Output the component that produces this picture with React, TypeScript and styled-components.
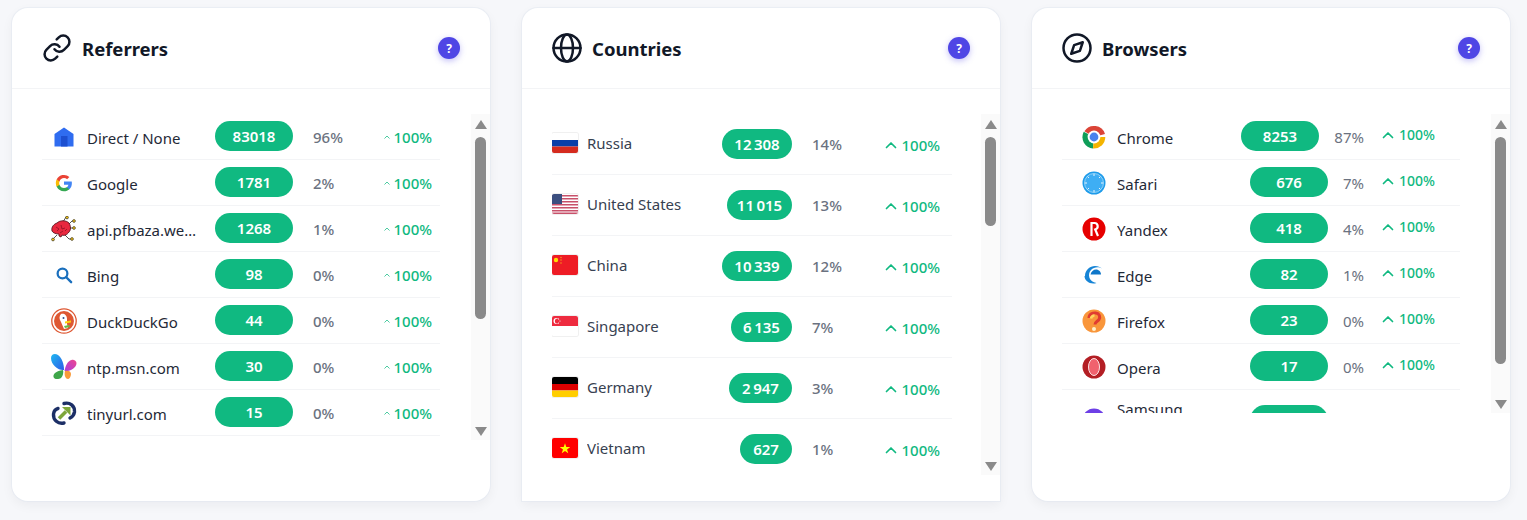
import React from "react";
import styled, { createGlobalStyle } from "styled-components";

const Global = createGlobalStyle`
  html, body { margin: 0; padding: 0; height: 520px; overflow: hidden; background: #f6f7fa; }
  * { box-sizing: border-box; }
`;

const Page = styled.div`
  display: flex;
  gap: 32px;
  padding: 8px 12px;
  font-family: "Noto Sans", "Open Sans", sans-serif;
  color: #1f2937;
`;

const Card = styled.section<{ $square?: boolean }>`
  width: 478px;
  height: 493px;
  background: #fff;
  border-radius: ${(p) => (p.$square ? "16px 16px 0 0" : "16px")};
  box-shadow: 0 0 0 1px rgba(226, 232, 240, 0.55), 0 4px 12px rgba(15, 23, 42, 0.05);
  display: flex;
  flex-direction: column;
  overflow: hidden;
`;

const Header = styled.header`
  height: 81px;
  flex: none;
  border-bottom: 1px solid #f3f4f6;
  display: flex;
  align-items: center;
  justify-content: space-between;
  padding: 0 30px;
`;

const Title = styled.h2`
  margin: 0;
  display: flex;
  align-items: center;
  gap: 10px;
  font-size: 18.5px;
  line-height: 24px;
  font-weight: 700;
  color: #111827;
`;

const TitleText = styled.span`
  padding-top: 1px;
`;

const Help = styled.span`
  width: 22px;
  height: 22px;
  border-radius: 50%;
  background: #4f46e5;
  color: #fff;
  font-size: 12px;
  font-weight: 700;
  display: flex;
  align-items: center;
  justify-content: center;
  box-shadow: 0 2px 6px rgba(79, 70, 229, 0.35);
`;

const Body = styled.div<{ $height: number }>`
  margin-top: 25px;
  height: ${(p) => p.$height}px;
  display: flex;
  justify-content: space-between;
`;

const List = styled.div<{ $left: number; $width: number }>`
  margin-left: ${(p) => p.$left}px;
  width: ${(p) => p.$width}px;
  overflow: hidden;
`;

const Row = styled.div<{ $height: number }>`
  height: ${(p) => p.$height}px;
  flex: none;
  border-bottom: 1px solid #f3f4f6;
  display: flex;
  align-items: center;
  font-size: 15px;
  overflow: hidden;
`;

const IconSlot = styled.span<{ $indent?: number }>`
  width: ${(p) => 45 + (p.$indent ?? 0)}px;
  flex: none;
  display: flex;
  align-items: center;
  justify-content: center;
  padding-left: ${(p) => p.$indent ?? 0}px;
  padding-right: 2px;
`;

const FlagSlot = styled.span`
  width: 35px;
  flex: none;
  display: flex;
  align-items: center;
  margin-top: -2px;
`;

const FlagBox = styled.span`
  display: block;
  width: 26px;
  height: 20px;
  border-radius: 2px;
  overflow: hidden;
  box-shadow: 0 0 0 1px #f0f0f0;
`;

const FlagArt = styled.svg`
  display: block;
`;

const Name = styled.span<{ $width: number; $shift?: number; $dim?: boolean; $wrap?: boolean }>`
  width: ${(p) => p.$width}px;
  flex: none;
  line-height: 20px;
  white-space: ${(p) => (p.$wrap ? "normal" : "nowrap")};
  overflow: hidden;
  text-overflow: ellipsis;
  color: ${(p) => (p.$dim ? "#374151" : "#1f2937")};
  transform: translateY(${(p) => p.$shift ?? 0}px);
`;

const PillCell = styled.span<{ $width: number; $shift?: number }>`
  width: ${(p) => p.$width}px;
  flex: none;
  display: flex;
  justify-content: flex-end;
  transform: translateX(${(p) => p.$shift ?? 0}px);
`;

const Pill = styled.span<{ $width: number; $rise?: number }>`
  width: ${(p) => p.$width}px;
  height: 30px;
  border-radius: 15px;
  background: #10b981;
  color: #fff;
  font-weight: 600;
  font-size: 15px;
  display: flex;
  align-items: center;
  justify-content: center;
  margin-top: ${(p) => p.$rise ?? -2}px;
`;

const Pct = styled.span<{ $width: number; $right?: boolean; $gap?: number }>`
  width: ${(p) => p.$width}px;
  margin-left: ${(p) => p.$gap ?? 0}px;
  flex: none;
  color: #6b7280;
  font-size: 15px;
  font-weight: ${(p) => (p.$right ? 400 : 500)};
  text-align: ${(p) => (p.$right ? "right" : "left")};
`;

const Trend = styled.span<{ $gap: number; $size: number; $weight: number; $rise?: number; $end: number }>`
  margin-left: auto;
  margin-right: ${(p) => p.$end}px;
  display: flex;
  align-items: center;
  gap: ${(p) => p.$gap}px;
  color: #10b981;
  font-size: ${(p) => p.$size}px;
  font-weight: ${(p) => p.$weight};
  transform: translateY(${(p) => p.$rise ?? 0}px);
`;

const Scrollbar = styled.div`
  width: 19px;
  flex: none;
  background: #fafafa;
  display: flex;
  flex-direction: column;
  align-items: center;
  padding: 6px 0 4px;
`;

const ArrowUp = styled.span`
  width: 0;
  height: 0;
  border-left: 6.5px solid transparent;
  border-right: 6.5px solid transparent;
  border-bottom: 9px solid #8a8a8a;
  flex: none;
`;

const ArrowDown = styled(ArrowUp)`
  border-bottom: 0;
  border-top: 9px solid #8a8a8a;
  margin-top: auto;
`;

const Thumb = styled.span<{ $height: number }>`
  width: 11px;
  height: ${(p) => p.$height}px;
  margin-top: 8px;
  border-radius: 6px;
  background: #8a8a8a;
  flex: none;
`;

const Icon = ({ children, size = 24 }: { children: React.ReactNode; size?: number }) => (
  <svg width={size} height={size} viewBox="0 0 24 24">{children}</svg>
);

const HeaderIcon = ({ children }: { children: React.ReactNode }) => (
  <svg width="30" height="30" viewBox="0 0 24 24" fill="none" stroke="#111827" strokeWidth="2" strokeLinecap="round" strokeLinejoin="round">{children}</svg>
);

const LinkIcon = () => (
  <HeaderIcon>
    <path d="M10 13a5 5 0 0 0 7.54.54l3-3a5 5 0 0 0-7.07-7.07l-1.72 1.71" />
    <path d="M14 11a5 5 0 0 0-7.54-.54l-3 3a5 5 0 0 0 7.07 7.07l1.71-1.71" />
  </HeaderIcon>
);
const GlobeIcon = () => (
  <HeaderIcon>
    <circle cx="12" cy="12" r="10.800" />
    <path d="M1.200 12h21.600" />
    <ellipse cx="12" cy="12" rx="4.800" ry="10.800" />
  </HeaderIcon>
);
const CompassIcon = () => (
  <HeaderIcon>
    <circle cx="12" cy="12" r="10.800" />
    <path d="M16.600 7.400l-2.300 6.900-6.900 2.300 2.300-6.900z" />
  </HeaderIcon>
);

const icons: Record<string, React.ReactNode> = {
  direct: (
    <Icon>
      <path d="M12 2.500 21.500 9v12.500h-19V9z" fill="#2f6cf0" />
      <rect x="9" y="11" width="6.500" height="10.500" fill="#1d4fd0" />
    </Icon>
  ),
  google: (
    <Icon size={18}>
      <path d="M22.500 12.200c0-.8-.1-1.500-.2-2.200H12v4.200h5.900a5 5 0 0 1-2.200 3.300v2.700h3.500c2.100-1.900 3.300-4.700 3.300-8z" fill="#4285f4" />
      <path d="M12 23c3 0 5.400-1 7.200-2.700l-3.500-2.700c-1 .7-2.200 1.100-3.700 1.100-2.800 0-5.200-1.900-6.100-4.500H2.300v2.800A11 11 0 0 0 12 23z" fill="#34a853" />
      <path d="M5.900 14.200a6.600 6.600 0 0 1 0-4.300V7.100H2.300a11 11 0 0 0 0 9.900z" fill="#fbbc05" />
      <path d="M12 5.400c1.600 0 3 .6 4.100 1.600l3.100-3.100A11 11 0 0 0 2.300 7.100l3.600 2.800C6.800 7.300 9.200 5.400 12 5.400z" fill="#ea4335" />
    </Icon>
  ),
  brain: (
    <svg width="26" height="26" viewBox="0 0 26 26">
      <g stroke="#555" strokeWidth="1" fill="none">
        <path d="M12 6 15 1h1M18 8l3-3h2M19 12h4M14 19l4 4h3M6 19l-4 4" />
      </g>
      <path d="M1 15c-1-4 2-7 5-8 3-3 9-3 12 0 2 3 2 7 0 9-2 3-5 4-7 3l-1 2-2-1v-2c-3 0-6-1-7-3z" fill="#e8283f" stroke="#4a0d16" strokeWidth=".8" />
      <path d="M5 11l3 2-2 2M10 9l1 4 3-1M9 17l3-2M14 15l2-2" stroke="#8e1325" strokeWidth=".8" fill="none" />
      <g fill="#f5c518" stroke="#222" strokeWidth=".6">
        <circle cx="16" cy="1.500" r="1.400" />
        <circle cx="23" cy="5" r="1.400" />
        <circle cx="23" cy="12" r="1.400" />
        <circle cx="21" cy="23" r="1.400" />
        <circle cx="2" cy="23.500" r="1.400" />
      </g>
    </svg>
  ),
  bing: (
    <Icon size={18}>
      <circle cx="10" cy="10" r="6.500" fill="none" stroke="#1a6fbd" strokeWidth="3" />
      <path d="M15 15l6.500 6.500" stroke="#1a6fbd" strokeWidth="3.200" strokeLinecap="round" />
    </Icon>
  ),
  duck: (
    <svg width="26" height="26" viewBox="0 0 26 26">
      <circle cx="13" cy="13" r="12.200" fill="#fff" stroke="#de5833" strokeWidth="1.300" />
      <circle cx="13" cy="13" r="10" fill="#de5833" />
      <path d="M10 6c3-1 6 1 6 5v5l1 4-4 1-3-7c-2-3-2-6 0-8z" fill="#fff" />
      <circle cx="12.500" cy="10" r="1" fill="#2d4f8e" />
      <path d="M14 13.500l6-1v2l-6 1z" fill="#fdd20a" />
      <path d="M13 18l5-1 1 2-5 1z" fill="#65bc46" />
    </svg>
  ),
  msn: (
    <svg width="26" height="26" viewBox="0 0 26 26">
      <defs>
        <linearGradient id="mL" x1="0" y1="0" x2="1" y2="1"><stop offset="0" stopColor="#1eb8f0" /><stop offset="1" stopColor="#2d5ce8" /></linearGradient>
        <linearGradient id="mR" x1="1" y1="0" x2="0" y2="1"><stop offset="0" stopColor="#f0468c" /><stop offset="1" stopColor="#a83ce0" /></linearGradient>
      </defs>
      <path d="M0 4C0 0 4-1 7 1c4 3 6 9 6 15-5 1-13-5-13-12z" fill="url(#mL)" />
      <path d="M25.500 9c0-2-3-4-5-3-4 1-6 6-7 11 5 1 12-3 12-8z" fill="url(#mR)" />
      <path d="M3 24c-2-3 1-7 9-8 1 4-1 9-5 9-2 0-3 0-4-1z" fill="#3fa64a" />
      <path d="M14 17c3-1 6 0 6 3s-2 5-3 5c-3 0-4-5-3-8z" fill="#f99a3a" />
    </svg>
  ),
  tiny: (
    <svg width="26" height="26" viewBox="0 0 26 26">
      <path d="M13 3.500C19 2 24 6 23.500 12c-.5 3-2.500 5-4.500 6M13 23c-6 1.500-11-3-10.500-9C3 11 5 9 7 8.500" fill="none" stroke="#1c2f66" strokeWidth="3.400" strokeLinecap="round" />
      <path d="M8 18.500 15 11.500" stroke="#7da63a" strokeWidth="3.600" />
      <path d="M11 7h8.500v8.500z" fill="#7da63a" />
    </svg>
  ),
  chrome: (
    <svg width="24" height="24" viewBox="0 0 24 24">
      <path d="M12 12 2.400 6.200A11.500 11.500 0 0 1 23 9z" fill="#db4437" />
      <path d="M12 12 1.700 6.800A11.500 11.500 0 0 0 11 23.500z" fill="#0f9d58" />
      <path d="M12 12h11.300A11.500 11.500 0 0 1 11 23.500z" fill="#f4b400" />
      <circle cx="12" cy="12" r="6.400" fill="#fff" />
      <circle cx="12" cy="12" r="4.400" fill="#4a82ed" />
    </svg>
  ),
  safari: (
    <svg width="24" height="24" viewBox="0 0 24 24">
      <circle cx="12" cy="12" r="11.500" fill="#1e9bea" />
      <circle cx="12" cy="12" r="9.500" fill="#3eaef4" stroke="#bfe6fb" strokeWidth=".7" />
      <path d="M12 3v2M12 19v2M3 12h2M19 12h2M5.600 5.600l1.300 1.300M17 17l1.300 1.300M5.600 18.400 7 17M17 7l1.300-1.300" stroke="#fff" strokeWidth=".9" />
    </svg>
  ),
  yandex: (
    <svg width="24" height="24" viewBox="0 0 24 24">
      <circle cx="12" cy="12" r="11.500" fill="#e60000" />
      <path d="M9.500 19V6h3a3.300 3.300 0 0 1 .7 6.500L16 19" fill="none" stroke="#fff" strokeWidth="2.200" />
    </svg>
  ),
  edge: (
    <svg width="24" height="24" viewBox="0 0 24 24">
      <path d="M3 13C3 7 8 3 13 3c3 0 5 1 7 2.500-3-2-8-2-11 1.500-2 2-2.500 5-1.500 8 1 2.500 3.500 4.500 7 5-6 2-12-2-12-7z" fill="#1684d6" />
      <path d="M8.500 11.500c.5-3 3-5 5.500-5 3 0 5 2.500 5 5z" fill="#0f77c9" />
    </svg>
  ),
  firefox: (
    <svg width="24" height="24" viewBox="0 0 24 24">
      <circle cx="12" cy="12" r="11.500" fill="#f9963b" />
      <path d="M7 9c0-4 4-5.500 7-5 3.500.5 4.500 4 3 6.500-1.500 2-4 2.500-4 5" fill="none" stroke="#e03c31" strokeWidth="3" />
      <path d="M9 9.500c.3-2 2-3 3.500-2.800" fill="none" stroke="#ffd75e" strokeWidth="2.600" />
      <circle cx="12" cy="20" r="2" fill="#fff1c9" />
    </svg>
  ),
  opera: (
    <svg width="24" height="24" viewBox="0 0 24 24">
      <circle cx="12" cy="12" r="11.500" fill="#b31e24" />
      <ellipse cx="12" cy="12" rx="5.500" ry="8.500" fill="#f0626e" stroke="#fde3e5" strokeWidth="1" />
    </svg>
  ),
  samsung: (
    <svg width="24" height="24" viewBox="0 0 24 24">
      <circle cx="12" cy="12" r="11.500" fill="#6d3fe6" />
    </svg>
  ),
};

const Flag = ({ children }: { children: React.ReactNode }) => (
  <FlagSlot>
    <FlagBox>
      <FlagArt width="26" height="20" viewBox="0 0 26 20">{children}</FlagArt>
    </FlagBox>
  </FlagSlot>
);

const flags: Record<string, React.ReactNode> = {
  ru: (
    <>
      <rect width="26" height="20" fill="#fff" />
      <rect y="7" width="26" height="6.500" fill="#0a3fa8" />
      <rect y="13.500" width="26" height="6.500" fill="#d52b1e" />
    </>
  ),
  us: (
    <>
      <rect width="26" height="20" fill="#fff" />
      {[1, 4, 7, 10, 13, 16, 18.5].map((y) => <rect key={y} y={y} width="26" height="1.500" fill="#c8516a" />)}
      <rect y="0" width="10" height="10" fill="#3c4f80" />
    </>
  ),
  cn: (
    <>
      <rect width="26" height="20" fill="#ee1c25" />
      <circle cx="4" cy="5" r="2.200" fill="#ffde00" />
      <g fill="#f7a81b"><circle cx="9" cy="2.500" r=".7" /><circle cx="9" cy="5" r=".7" /><circle cx="9" cy="8" r=".7" /></g>
    </>
  ),
  sg: (
    <>
      <rect width="26" height="20" fill="#fff" />
      <rect width="26" height="10" fill="#ee2b3f" />
      <circle cx="4.500" cy="5" r="3" fill="#fff" />
      <circle cx="5.500" cy="5" r="2.600" fill="#ee2b3f" />
      <g fill="#fff"><circle cx="6.500" cy="3" r=".6" /><circle cx="8" cy="5" r=".6" /><circle cx="6.500" cy="7" r=".6" /></g>
    </>
  ),
  de: (
    <>
      <rect width="26" height="7" fill="#000" />
      <rect y="7" width="26" height="6.500" fill="#dd0000" />
      <rect y="13.500" width="26" height="6.500" fill="#ffce00" />
    </>
  ),
  vn: (
    <>
      <rect width="26" height="20" fill="#f00" />
      <path d="M13 5.200l1.300 3.800h4l-3.300 2.400 1.300 3.900-3.300-2.400-3.300 2.400 1.300-3.900L7.700 9h4z" fill="#ff0" />
    </>
  ),
};

const referrers = [
  ["direct", "Direct / None", "83018", "96%"],
  ["google", "Google", "1781", "2%"],
  ["brain", "api.pfbaza.website", "1268", "1%"],
  ["bing", "Bing", "98", "0%"],
  ["duck", "DuckDuckGo", "44", "0%"],
  ["msn", "ntp.msn.com", "30", "0%"],
  ["tiny", "tinyurl.com", "15", "0%"],
];

const countries = [
  ["ru", "Russia", "12\u2009308", "14%", 70],
  ["us", "United States", "11\u2009015", "13%", 65],
  ["cn", "China", "10\u2009339", "12%", 70],
  ["sg", "Singapore", "6\u2009135", "7%", 61],
  ["de", "Germany", "2\u2009947", "3%", 63],
  ["vn", "Vietnam", "627", "1%", 52],
] as const;

const browsers = [
  ["chrome", "Chrome", "8253", "87%"],
  ["safari", "Safari", "676", "7%"],
  ["yandex", "Yandex", "418", "4%"],
  ["edge", "Edge", "82", "1%"],
  ["firefox", "Firefox", "23", "0%"],
  ["opera", "Opera", "17", "0%"],
];

const Chevron = ({ size, width }: { size: number; width: number }) => (
  <svg width={size} height={size} viewBox="0 0 12 12" fill="none" stroke="#10b981" strokeWidth={width} strokeLinecap="round" strokeLinejoin="round">
    <path d="M1.500 8.500 6 4l4.500 4.500" />
  </svg>
);

const Bar = ({ thumb }: { thumb: number }) => (
  <Scrollbar>
    <ArrowUp />
    <Thumb $height={thumb} />
    <ArrowDown />
  </Scrollbar>
);

export default function App() {
  return (
    <Page>
      <Global />
      <Card>
        <Header>
          <Title><LinkIcon /><TitleText>Referrers</TitleText></Title>
          <Help>?</Help>
        </Header>
        <Body $height={326}>
          <List $left={30} $width={398}>
            {referrers.map(([ic, name, n, pct]) => (
              <Row key={name} $height={46}>
                <IconSlot>{icons[ic]}</IconSlot>
                <Name $width={112} $shift={1}>{name}</Name>
                <PillCell $width={94}><Pill $width={78}>{n}</Pill></PillCell>
                <Pct $width={50} $gap={20}>{pct}</Pct>
                <Trend $gap={3} $size={15} $weight={500} $end={8}>
                  <Chevron size={6} width={1.5} />100%
                </Trend>
              </Row>
            ))}
          </List>
          <Bar thumb={182} />
        </Body>
      </Card>
      <Card $square>
        <Header>
          <Title><GlobeIcon /><TitleText>Countries</TitleText></Title>
          <Help>?</Help>
        </Header>
        <Body $height={361}>
          <List $left={30} $width={400}>
            {countries.map(([f, name, n, pct, w]) => (
              <Row key={name} $height={61}>
                <Flag>{flags[f]}</Flag>
                <Name $width={135} $shift={-1} $dim>{name}</Name>
                <PillCell $width={70}><Pill $width={w} $rise={0}>{n}</Pill></PillCell>
                <Pct $width={50} $gap={20}>{pct}</Pct>
                <Trend $gap={4} $size={15} $weight={500} $rise={1} $end={12}>
                  <Chevron size={12} width={1.7} />100%
                </Trend>
              </Row>
            ))}
          </List>
          <Bar thumb={89} />
        </Body>
      </Card>
      <Card>
        <Header>
          <Title><CompassIcon /><TitleText>Browsers</TitleText></Title>
          <Help>?</Help>
        </Header>
        <Body $height={299}>
          <List $left={30} $width={398}>
            {browsers.map(([ic, name, n, pct], i) => (
              <Row key={name} $height={46}>
                <IconSlot $indent={10}>{icons[ic]}</IconSlot>
                <Name $width={127} $shift={1}>{name}</Name>
                <PillCell $width={84} $shift={i === 0 ? -9 : 0}><Pill $width={78}>{n}</Pill></PillCell>
                <Pct $width={36} $right>{pct}</Pct>
                <Trend $gap={5} $size={14} $weight={500} $rise={-2} $end={25}>
                  <Chevron size={12} width={1.7} />100%
                </Trend>
              </Row>
            ))}
            <Row $height={61}>
              <IconSlot $indent={10}>{icons.samsung}</IconSlot>
              <Name $width={80} $wrap $shift={-1}>Samsung Internet</Name>
              <PillCell $width={131}><Pill $width={78} $rise={0}>12</Pill></PillCell>
              <Pct $width={36} $right>0%</Pct>
              <Trend $gap={5} $size={14} $weight={500} $rise={-3} $end={25}>
                <Chevron size={12} width={1.7} />100%
              </Trend>
            </Row>
          </List>
          <Bar thumb={227} />
        </Body>
      </Card>
    </Page>
  );
}
